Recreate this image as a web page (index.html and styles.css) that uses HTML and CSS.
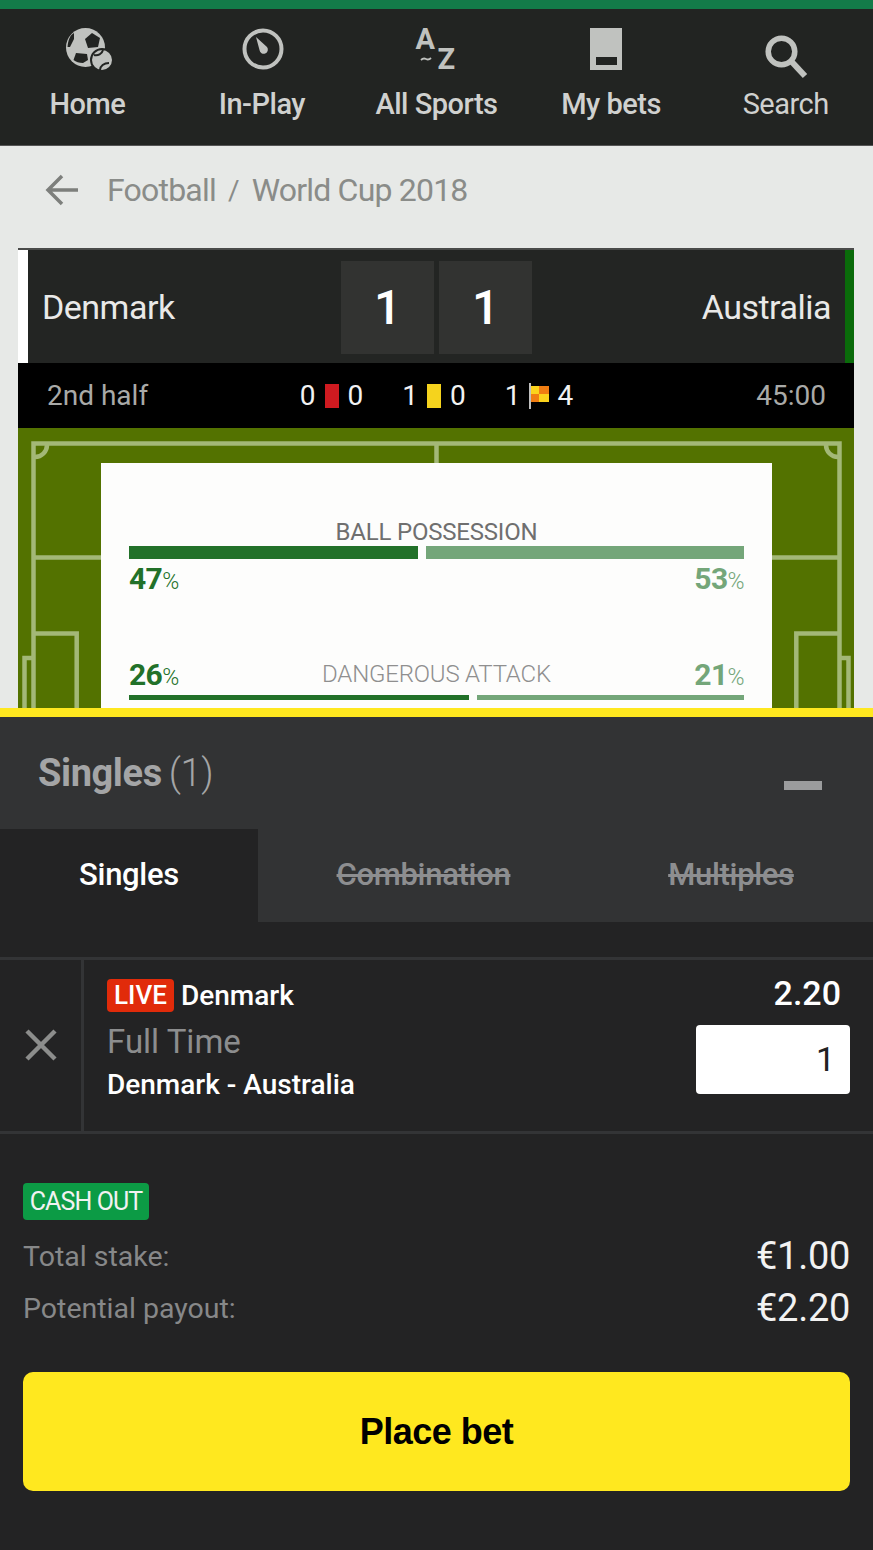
FILE: index.html
```html
<!DOCTYPE html>
<html lang="en">

<head>
    <meta charset="UTF-8">
    <title>Denmark - Australia</title>
    <link rel="stylesheet" href="styles.css">
</head>

<body>
    <div class="top-strip"></div>

    <!-- Main nav -->
    <nav class="navbar">
        <a class="nav-item">
            <svg class="nav-icon" width="50" height="44" viewBox="0 0 50 44">
                <circle cx="23.500" cy="20.500" r="19.500" fill="#c0c2bf" />
                <path d="M30 6l8 5-2 9-10 1-3-9z" fill="#222422" />
                <path d="M12 6C8 8 6 13 5.500 20L8 20l4-8z" fill="#222422" />
                <path d="M14 26l11 1 1 6-5 3c-4 0-7-1-9.500-3z" fill="#222422" />
                <circle cx="40" cy="33" r="11" fill="#c0c2bf" stroke="#222422" stroke-width="2" />
                <path d="M32 28c4 1 8-1 9-5M38 43c0-4 4-7 9-7" fill="none" stroke="#222422" stroke-width="2" />
            </svg>
            <span>Home</span>
        </a>
        <a class="nav-item">
            <svg class="nav-icon" width="44" height="44" viewBox="0 0 44 44">
                <circle cx="23" cy="22" r="18.500" fill="none" stroke="#c0c2bf" stroke-width="4" />
                <path d="M16 10l11 10a4.200 4.200 0 1 1-7.500 3z" fill="#c0c2bf" />
            </svg>
            <span>In-Play</span>
        </a>
        <a class="nav-item">
            <svg class="nav-icon" width="44" height="44" viewBox="0 0 44 44">
                <text class="az-letter" x="1.500" y="22">A</text>
                <path d="M7 33c2-2 3-2 5-1s3 1 5-1" fill="none" stroke="#c0c2bf" stroke-width="1.800" />
                <text class="az-letter" x="23.500" y="42">Z</text>
            </svg>
            <span>All Sports</span>
        </a>
        <a class="nav-item">
            <svg class="nav-icon icon-bets" width="32" height="44" viewBox="0 0 32 44">
                <path d="M0 1h32v42H0z M6 30v8h21v-8z" fill="#c0c2bf" fill-rule="evenodd" />
            </svg>
            <span>My bets</span>
        </a>
        <a class="nav-item">
            <svg class="nav-icon" width="44" height="44" viewBox="0 0 44 44">
                <circle cx="17.500" cy="24.500" r="13.300" fill="none" stroke="#c0c2bf" stroke-width="5.500" />
                <path d="M27 34l14 15" fill="none" stroke="#c0c2bf" stroke-width="6" />
            </svg>
            <span>Search</span>
        </a>
    </nav>

    <div class="content">
        <!-- Breadcrumb -->
        <div class="breadcrumb">
            <svg width="34" height="34" viewBox="0 0 34 34">
                <path d="M33 17H4M17 3L3 17l14 14" fill="none" stroke="#7d7f7c" stroke-width="3.500" />
            </svg>
            <span class="crumb">Football</span>
            <span class="crumb-sep">/</span>
            <span class="crumb">World Cup 2018</span>
        </div>

        <!-- Scoreboard -->
        <div class="scoreboard">
            <div class="score-head">
                <div class="team">Denmark</div>
                <div class="score">
                    <div class="score-box">1</div>
                    <div class="score-box">1</div>
                </div>
                <div class="team team-away">Australia</div>
            </div>

            <div class="match-bar">
                <span class="period">2nd half</span>
                <div class="counters">
                    <div class="counter"><span>0</span><i class="card red"></i><span>0</span></div>
                    <div class="counter"><span>1</span><i class="card yellow"></i><span>0</span></div>
                    <div class="counter">
                        <span>1</span>
                        <svg class="flag" width="22" height="26" viewBox="0 0 22 26">
                            <path d="M1 0v26" stroke="#fff" stroke-width="1.500" />
                            <path d="M2 3h18v16H2z" fill="#f5a80f" />
                            <path d="M2 3h8v8H2zM10 11h10v8H10z" fill="#fbd31c" />
                            <path d="M10 3h10v8H10zM2 11h8v8H2z" fill="#f07d12" />
                        </svg>
                        <span>4</span>
                    </div>
                </div>
                <span class="clock">45:00</span>
            </div>

            <div class="pitch">
                <svg class="pitch-lines" width="836" height="280" viewBox="0 0 836 280">
                    <g fill="none" stroke="#a3b877" stroke-width="4.500">
                        <path d="M15.500 330V15.500H821.500V330" />
                        <path d="M418.500 15.500V40" />
                        <path d="M17 29a12 12 0 0 0 12-12M808 17a12 12 0 0 0 12 12" />
                        <path d="M15.500 129.500H90M747 129.500H821.500" />
                        <path d="M15.500 205.500H58.700V300M821.500 205.500H778.300V300" />
                        <path d="M15.500 230H6.500V300M821.500 230H830.500V300" />
                    </g>
                </svg>

                <div class="stats-card">
                    <div class="stat-title">BALL POSSESSION</div>
                    <div class="stat-bars stat-bars-thick">
                        <div class="bar bar-home" style="width: 47%"></div>
                        <div class="bar bar-away"></div>
                    </div>
                    <div class="stat-values">
                        <span class="val-home">47<small>%</small></span>
                        <span class="val-away">53<small>%</small></span>
                    </div>

                    <div class="stat-values stat-values-inline">
                        <span class="val-home">26<small>%</small></span>
                        <span class="stat-label">DANGEROUS ATTACK</span>
                        <span class="val-away">21<small>%</small></span>
                    </div>
                    <div class="stat-bars">
                        <div class="bar bar-home" style="width: 55.300%"></div>
                        <div class="bar bar-away"></div>
                    </div>
                </div>
            </div>
        </div>
    </div>

    <!-- Bet slip -->
    <div class="slip">
        <div class="slip-head">
            <h2>Singles <span>(1)</span></h2>
            <div class="collapse"></div>
        </div>

        <div class="tabs">
            <div class="tab tab-active">Singles</div>
            <div class="tab tab-combo">Combination</div>
            <div class="tab tab-multi">Multiples</div>
        </div>

        <div class="bet-row">
            <div class="bet-remove">
                <svg width="34" height="34" viewBox="0 0 34 34">
                    <path d="M3 3l28 28M31 3L3 31" fill="none" stroke="#8c8d8c" stroke-width="4.500" />
                </svg>
            </div>
            <div class="bet-info">
                <div class="bet-pick"><span class="live">LIVE</span>Denmark</div>
                <div class="bet-market">Full Time</div>
                <div class="bet-match">Denmark - Australia</div>
            </div>
            <div class="bet-stake">
                <div class="odds">2.20</div>
                <div class="stake-input">1</div>
            </div>
        </div>

        <div class="summary">
            <span class="cash-out">CASH OUT</span>
            <div class="summary-row summary-first">
                <span>Total stake:</span>
                <strong>€1.00</strong>
            </div>
            <div class="summary-row">
                <span>Potential payout:</span>
                <strong>€2.20</strong>
            </div>
            <button class="place-bet">Place bet</button>
        </div>
    </div>
</body>

</html>
```

FILE: styles.css
```css
* {
    margin: 0;
    padding: 0;
    box-sizing: border-box;
    font-family: 'Roboto', sans-serif;
}

body {
    width: 873px;
    height: 1550px;
    overflow: hidden;
    background-color: #232324;
}

.top-strip {
    height: 9px;
    background-color: #137b49;
}

/* Navbar */
.navbar {
    display: flex;
    justify-content: space-between;
    height: 137px;
    background-color: #222422;
    border-bottom: 1px solid #555;
}

.nav-item {
    display: flex;
    flex-direction: column;
    align-items: center;
    width: 174.600px;
    color: #d0d1cf;
    font-size: 29px;
    font-weight: 500;
    letter-spacing: -0.5px;
}

.nav-icon {
    height: 44px;
    margin-top: 18px;
    margin-bottom: 17px;
    overflow: visible;
}

.icon-bets {
    margin-right: 10px;
}

.nav-item span {
    line-height: 32px;
}

.nav-item:last-child span {
    font-weight: 400;
}

.az-letter {
    font-size: 29px;
    font-weight: 700;
    fill: #c0c2bf;
}

/* Breadcrumb and scoreboard */
.content {
    height: 562px;
    overflow: hidden;
    padding: 0 19px 0 18px;
    background-color: #e7e9e7;
}

.breadcrumb {
    display: flex;
    align-items: center;
    height: 102px;
    padding-left: 27px;
    padding-bottom: 14px;
    color: #8a8c89;
    font-size: 32px;
    letter-spacing: -0.8px;
}

.breadcrumb svg {
    margin-right: 28px;
}

.crumb-sep {
    margin: 0 13px 0 12px;
    font-size: 28px;
}

.scoreboard {
    border-top: 2px solid #4a4b4a;
}

.score-head {
    display: flex;
    align-items: center;
    justify-content: space-between;
    height: 113px;
    padding: 0 14px;
    background-color: #232523;
    border-left: 10px solid #fff;
    border-right: 9px solid #0a6b0a;
    color: #e9e9e8;
    font-size: 34px;
    letter-spacing: -0.5px;
}

.team {
    width: 260px;
}

.team-away {
    text-align: right;
}

.score {
    display: flex;
    gap: 5px;
    margin-top: 2px;
}

.score-box {
    width: 93px;
    height: 93px;
    background-color: #323331;
    color: #fff;
    font-size: 48px;
    font-weight: 500;
    line-height: 93px;
    text-align: center;
}

.match-bar {
    display: flex;
    align-items: center;
    height: 65px;
    padding: 0 28px 0 29px;
    background-color: #000;
    color: #a9aaa8;
    font-size: 28px;
}

.period,
.clock {
    flex: 1;
}

.clock {
    text-align: right;
}

.counters {
    display: flex;
    gap: 39px;
    color: #f2f2f2;
}

.counter {
    display: flex;
    align-items: center;
    gap: 9px;
}

.card {
    display: block;
    width: 14px;
    height: 24px;
}

.red {
    background-color: #cf1a20;
}

.yellow {
    background-color: #f5d31d;
}

.flag {
    margin: 0 -2px 0 -1px;
}

/* Pitch */
.pitch {
    position: relative;
    height: 280px;
    overflow: hidden;
    padding-top: 35px;
    background-color: #537200;
}

.pitch-lines {
    position: absolute;
    top: 0;
    left: 0;
}

.stats-card {
    position: relative;
    width: 671px;
    height: 300px;
    margin-left: 83px;
    padding: 55px 28px 0;
    background-color: #fdfdfc;
}

.stat-title {
    color: #6f6f6f;
    font-size: 24px;
    line-height: 28px;
    text-align: center;
    letter-spacing: -0.2px;
}

.stat-bars {
    display: flex;
    gap: 8px;
}

.bar {
    height: 5px;
}

.stat-bars-thick .bar {
    height: 13px;
}

.bar-home {
    flex: none;
    background-color: #227129;
}

.bar-away {
    flex: 1;
    background-color: #74a679;
}

.stat-values {
    display: flex;
    justify-content: space-between;
    margin-top: 3px;
    font-size: 30px;
    font-weight: 700;
    letter-spacing: -0.6px;
    line-height: 34px;
}

.stat-values-inline {
    align-items: center;
    margin-top: 58px;
    margin-bottom: 0;
}

.stat-values small {
    font-size: 23px;
    font-weight: 300;
}

.val-home {
    color: #227129;
}

.val-away {
    color: #74a679;
}

.stat-label {
    padding-bottom: 4px;
    color: #8f8f8f;
    font-size: 24px;
    font-weight: 300;
    letter-spacing: -0.2px;
}

/* Bet slip */
.slip {
    border-top: 9px solid #ffe81f;
    background-color: #232324;
}

.slip-head {
    display: flex;
    align-items: center;
    justify-content: space-between;
    height: 112px;
    padding: 0 51px 0 38px;
    background-color: #323334;
}

.slip-head h2 {
    color: #a4a5a6;
    font-size: 38px;
    font-weight: 700;
    letter-spacing: -0.4px;
    word-spacing: -2px;
    line-height: 112px;
}

.slip-head h2 span {
    font-weight: 300;
}

.collapse {
    width: 38px;
    height: 9px;
    margin-top: 24px;
    background-color: #9b9c9d;
}

.tabs {
    display: flex;
    height: 93px;
    background-color: #323334;
    color: #8d8e90;
    font-size: 31px;
    font-weight: 500;
    letter-spacing: -0.3px;
    line-height: 92px;
}

.tab {
    text-align: center;
    text-decoration: line-through;
}

.tab-active {
    width: 258px;
    background-color: #232324;
    color: #fff;
    text-decoration: none;
}

.tab-combo {
    width: 331px;
}

.tab-multi {
    flex: 1;
}

.bet-row {
    display: flex;
    height: 177px;
    margin-top: 35px;
    border-top: 3px solid #333436;
    border-bottom: 3px solid #333436;
}

.bet-remove {
    display: flex;
    align-items: center;
    justify-content: center;
    width: 84px;
    padding-bottom: 2px;
    padding-left: 1px;
    border-right: 3px solid #333436;
}

.bet-info {
    flex: 1;
    padding: 19px 0 0 23px;
}

.bet-pick {
    display: flex;
    align-items: center;
    color: #fff;
    font-size: 28px;
    font-weight: 500;
    line-height: 33px;
}

.live {
    margin-right: 7px;
    padding: 0 7px;
    border-radius: 4px;
    background-color: #e12b0a;
    font-size: 26px;
    font-weight: 500;
}

.bet-market {
    margin-top: 10px;
    color: #8c8d8e;
    font-size: 33px;
    line-height: 40px;
}

.bet-match {
    margin-top: 4px;
    color: #fff;
    font-size: 28px;
    font-weight: 500;
    line-height: 38px;
}

.bet-stake {
    display: flex;
    flex-direction: column;
    align-items: flex-end;
    padding: 14px 23px 0 0;
}

.odds {
    margin-right: 9px;
    color: #fff;
    font-size: 34px;
    font-weight: 500;
    line-height: 38px;
}

.stake-input {
    width: 154px;
    height: 69px;
    margin-top: 13px;
    padding-right: 15px;
    border-radius: 4px;
    background-color: #fff;
    color: #222;
    font-size: 34px;
    line-height: 69px;
    text-align: right;
}

.summary {
    padding: 49px 23px 0;
}

.cash-out {
    display: block;
    width: 126px;
    border-radius: 4px;
    background-color: #0c9b45;
    color: #f2f2f2;
    font-size: 25px;
    letter-spacing: -0.9px;
    line-height: 37px;
    text-align: center;
}

.summary-row {
    display: flex;
    align-items: center;
    justify-content: space-between;
    height: 52px;
    color: #878889;
    font-size: 28.500px;
}

.summary-first {
    margin-top: 10px;
}

.summary-row strong {
    color: #f2f2f2;
    font-size: 38px;
    font-weight: 400;
    letter-spacing: -0.3px;
}

.place-bet {
    display: block;
    width: 100%;
    height: 119px;
    margin-top: 38px;
    border: none;
    border-radius: 10px;
    background-color: #ffe81f;
    color: #000;
    font-family: 'Liberation Sans', sans-serif;
    font-size: 36px;
    font-weight: 700;
    letter-spacing: -0.5px;
}
```
